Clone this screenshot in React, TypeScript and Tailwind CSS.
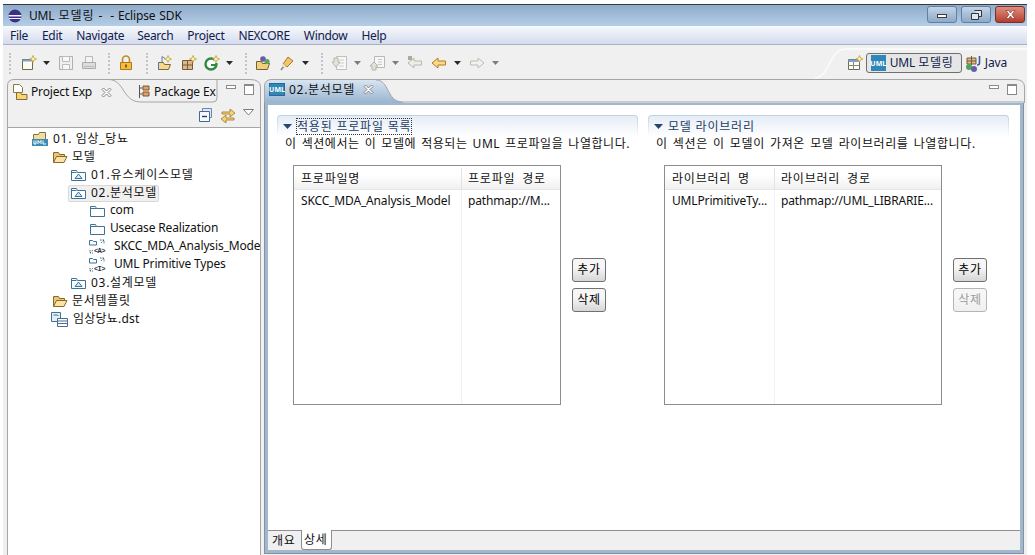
import type { ReactNode } from 'react'

function Svg({ w = 16, h = 16, children, className }: { w?: number; h?: number; children: ReactNode; className?: string }) {
  return (
    <svg width={w} height={h} viewBox={`0 0 ${w} ${h}`} className={`shrink-0 block ${className ?? ''}`}>
      {children}
    </svg>
  )
}

function Grip({ className }: { className: string }) {
  return <span className={`block h-[21px] w-[2px] border-l-2 border-dotted border-[#c4c4c4] ${className}`} />
}

function Drop({ className, off }: { className: string; off?: boolean }) {
  return (
    <Svg w={7} h={4} className={className}>
      <path d="M0 0h7L3.5 4z" fill={off ? '#7d7d7d' : '#2b2b2b'} />
    </Svg>
  )
}

const Spark = ({ x, y }: { x: number; y: number }) => (
  <path d={`M${x} ${y - 3.5}l1 2.5 2.5 1-2.5 1-1 2.5-1-2.5-2.5-1 2.5-1z`} fill="#fff3b0" stroke="#b99a2c" strokeWidth=".7" />
)

function NewIcon() {
  return (
    <Svg>
      <path d="M1.5 4.5h10v10h-10z" fill="#fbfbf4" stroke="#6f6a4a" />
      <path d="M1.5 4.5h10v2h-10z" fill="#7fa3cc" />
      <Spark x={12} y={4} />
    </Svg>
  )
}

function SaveIcon() {
  return (
    <Svg>
      <path d="M1.5 1.5h13v13h-13z" fill="#efefef" stroke="#b0b0b0" />
      <path d="M4.5 1.5h7v5h-7zM4.5 9.5h7v5h-7z" fill="#f8f8f8" stroke="#bcbcbc" />
    </Svg>
  )
}

function PrintIcon() {
  return (
    <Svg>
      <path d="M4.5 1.5h7v6h-7z" fill="#f4f4f4" stroke="#b8b8b8" />
      <path d="M1.5 7.5h13v6h-13z" fill="#dcdcdc" stroke="#aaa" />
      <path d="M3 11.5h10" stroke="#bbb" />
    </Svg>
  )
}

function LockIcon() {
  return (
    <Svg>
      <path d="M4.5 7V4.5a3.5 3.5 0 017 0V7" fill="none" stroke="#c08a1e" strokeWidth="1.6" />
      <path d="M2.5 7.5h11v7h-11z" fill="#f5bd3f" stroke="#b0761a" />
      <path d="M7 9.5h2v3H7z" fill="#8a5a10" />
    </Svg>
  )
}

function OpenProjIcon() {
  return (
    <Svg>
      <path d="M5 1.5v6M5 1.5l3 2" stroke="#5a7fb0" fill="none" />
      <path d="M1.5 7.5h5l1 2h6l-2 5h-10z" fill="#f5d98a" stroke="#7a6c3c" />
      <path d="M1.5 14.5v-7" stroke="#4d79b3" />
      <Spark x={11} y={4} />
    </Svg>
  )
}

function GridIcon() {
  return (
    <Svg>
      <path d="M1.5 5.5h10v9h-10z" fill="#d9b98a" stroke="#7b5a38" />
      <path d="M6.5 5.5v9M1.5 10h10" stroke="#7b5a38" />
      <Spark x={12} y={4} />
    </Svg>
  )
}

function GIcon() {
  return (
    <Svg>
      <circle cx="7" cy="9" r="5.5" fill="#fff" stroke="#2f8a3e" strokeWidth="2.4" />
      <path d="M7 9h5v2H7z" fill="#2f8a3e" />
      <path d="M10 4h4v4h-4z" fill="#f0f0f0" />
      <Spark x={12} y={4} />
    </Svg>
  )
}

function FolderBalls() {
  return (
    <Svg>
      <path d="M1.5 6.5h5l1 2h7l-2 6h-11z" fill="#f2cf7c" stroke="#75622f" />
      <circle cx="8" cy="4" r="2.8" fill="#6a5ba8" />
      <circle cx="12" cy="6.5" r="2.6" fill="#5aa55a" />
    </Svg>
  )
}

function PinIcon() {
  return (
    <Svg>
      <path d="M9 2l5 4-6 6-4-3z" fill="#f3c46a" stroke="#a8782a" />
      <path d="M5 11l-3 4" stroke="#8a8a8a" strokeWidth="1.6" />
      <path d="M3 9l4 4" stroke="#e8e8d0" strokeWidth="2" />
    </Svg>
  )
}

function DocDownIcon() {
  return (
    <Svg>
      <path d="M4.5 1.5h10v13h-10z" fill="#f7f7f7" stroke="#c0c0c0" />
      <path d="M7 5h5M7 8h5M7 11h5" stroke="#d0d0d0" />
      <path d="M2 3h4v4h2l-4 5-4-5h2z" fill="#e4e4da" stroke="#b4b4a8" />
    </Svg>
  )
}

function DocUpIcon() {
  return (
    <Svg>
      <path d="M4.5 1.5h10v11h-10z" fill="#f7f7f7" stroke="#b8b8b8" />
      <path d="M8 4.5h4M8 7h4M8 9.5h4" stroke="#c8c8c8" />
      <path d="M4 7l4 4H6v4H2v-4H0z" fill="#e2e2d8" stroke="#b4b4a8" />
    </Svg>
  )
}

function ArrowLeft({ fill, stroke, dot }: { fill: string; stroke: string; dot?: boolean }) {
  return (
    <Svg>
      <path d="M1 8l6-5v3h7.5v4H7v3z" fill={fill} stroke={stroke} strokeLinejoin="round" />
      {dot && <path d="M1 1h4v4H1z" fill="#a9a9a9" />}
    </Svg>
  )
}

function ArrowRight() {
  return (
    <Svg>
      <path d="M15 8L9 3v3H1.5v4H9v3z" fill="#f2f2ee" stroke="#bdbdb4" strokeLinejoin="round" />
    </Svg>
  )
}

function UmlBadge({ className }: { className?: string }) {
  return (
    <span className={`flex items-center justify-center bg-[#2f86b8] text-[7px] font-bold leading-none tracking-normal text-white ${className ?? ''}`}>
      UML
    </span>
  )
}

function PerspectiveIcon() {
  return (
    <Svg>
      <path d="M1.5 4.5h11v10h-11z" fill="#fff" stroke="#6b6b4f" />
      <path d="M1.5 4.5h11v2.5h-11z" fill="#7fa3cc" />
      <path d="M6.5 7v7.5M1.5 10.5h11" stroke="#8c8c6c" />
      <Spark x={12.5} y={4} />
    </Svg>
  )
}

function JavaIcon() {
  return (
    <Svg w={17} h={17}>
      <path d="M2 3h9v6H2z" fill="#d9b98a" stroke="#7b5a38" />
      <path d="M6.5 1v9M2 6h9" stroke="#7b5a38" />
      <circle cx="4" cy="12" r="3" fill="#4fa35a" />
      <circle cx="9" cy="14" r="3" fill="#6a5ba8" />
      <path d="M14.5 1v7q0 2-2.5 2" fill="none" stroke="#2e5f9e" strokeWidth="1.6" />
    </Svg>
  )
}

function MinMax({ className }: { className: string }) {
  return (
    <div className={`absolute flex items-start ${className}`}>
      <span className="mt-[1px] block h-[4px] w-[10px] border border-[#8a8a8a] bg-white" />
      <span className="ml-[8px] block h-[11px] w-[10px] border border-[#8a8a8a] border-t-2 bg-white" />
    </div>
  )
}

function CloseX({ className }: { className?: string }) {
  return (
    <Svg w={11} h={11} className={className}>
      <path d="M1 2.5L2.5 1 5.5 4 8.5 1 10 2.5 7 5.5 10 8.5 8.5 10 5.5 7 2.5 10 1 8.5 4 5.5z" fill="#fff" stroke="#777" strokeWidth=".9" />
    </Svg>
  )
}

function ProjectFolder() {
  return (
    <Svg>
      <path d="M1.5 3.5h5l1-2h6v8h-12z" fill="#f2dca0" stroke="#85743f" />
      <path d="M0 8h16v7H0z" fill="#3c8cb4" />
      <path d="M2 9.5v3.500h2v-3.500M6 13V9.500l1.500 2 1.500-2V13M11 9.500V13h3" fill="none" stroke="#fff" />
    </Svg>
  )
}

function OpenFolder() {
  return (
    <Svg>
      <path d="M1.500 13.500v-10h5l1 2h5v2" fill="#f0c36e" stroke="#8a6a2c" />
      <path d="M1.500 13.500l3-6h10.500l-3 6z" fill="#fbe3a6" stroke="#8a6a2c" />
    </Svg>
  )
}

function PackageFolder() {
  return (
    <Svg w={15} h={16}>
      <path d="M.5 3.500h5l1 2h8v8H.5z" fill="#fff" stroke="#3d7396" />
      <path d="M.5 5.500h5" stroke="#3d7396" />
      <path d="M7.500 7l3.500 4.500H4z" fill="#d6e6f2" stroke="#3d7396" />
    </Svg>
  )
}

function PlainFolder() {
  return (
    <Svg w={15} h={16}>
      <path d="M.5 3.500h5l1 2h8v8H.5z" fill="#fff" stroke="#3d7396" />
      <path d="M.5 5.500h6" stroke="#3d7396" />
    </Svg>
  )
}

function ProfileIcon({ letter }: { letter: string }) {
  return (
    <span className="relative block h-[16px] w-[16px] shrink-0">
      <Svg>
        <path d="M.5 1.500h3l1 1h3v3.500h-7z" fill="#fff" stroke="#3d7396" />
        <path d="M11 1h4v4M15 1l-3 3M1 14l3-3M1 11v3h3" fill="none" stroke="#44687f" strokeDasharray="1.500 1" />
      </Svg>
      <span className="absolute left-[5px] top-[8px] font-['Liberation_Mono',monospace] text-[7px] font-bold leading-[8px] tracking-[-0.6px] text-[#1f2f40]">{`<${letter}>`}</span>
    </span>
  )
}

function DstIcon() {
  return (
    <Svg w={17} h={16}>
      <path d="M.5 1.500h9v9h-9z" fill="#e3eefa" stroke="#3d7396" />
      <path d="M2.500 4h4l1 1" fill="none" stroke="#3d7396" />
      <path d="M6.500 7.500h10v8h-10z" fill="#fff" stroke="#4b6d91" />
      <path d="M6.500 10h10M6.500 12.500h10" stroke="#4b6d91" />
    </Svg>
  )
}

function TreeRow({ pad, icon, text, gap }: { pad: string; icon: ReactNode; text: string; gap: string }) {
  return (
    <div className={`flex h-[18px] items-center whitespace-nowrap ${pad}`}>
      {icon}
      <span className={gap}>{text}</span>
    </div>
  )
}

function ProfileTable({
  width,
  col1,
  head1,
  head2,
  cell1,
  cell2,
}: {
  width: string
  col1: string
  head1: string
  head2: string
  cell1: string
  cell2: string
}) {
  return (
    <div className={`flex h-[240px] flex-col border border-[#8c8c8c] bg-white ${width}`}>
      <div className="flex h-[24px] border-b border-[#e6e6e6] bg-gradient-to-b from-white from-40% to-[#f0f0f0] pt-[2px] tracking-[0.8px] [word-spacing:3px]">
        <div className={`flex items-center border-r border-[#e3e3e3] pl-[7px] ${col1}`}>{head1}</div>
        <div className="flex flex-1 items-center pl-[6px]">{head2}</div>
      </div>
      <div className="flex flex-1">
        <div className={`border-r border-[#edf2fb] pl-[7px] pt-[5px] ${col1}`}>
          <div className="whitespace-nowrap">{cell1}</div>
        </div>
        <div className="flex-1 pl-[6px] pt-[5px]">
          <div className="whitespace-nowrap">{cell2}</div>
        </div>
      </div>
    </div>
  )
}

function SmallButton({ label, off }: { label: string; off?: boolean }) {
  return (
    <button
      className={`h-[24px] w-[34px] rounded-[3px] border bg-gradient-to-b from-[#f6f6f6] from-40% to-[#d6d6d6] text-[12px] tracking-[0.6px] ${
        off ? 'border-[#b5b5b5] from-[#f4f4f4] to-[#efefef] text-[#9a9a9a]' : 'border-[#707070] text-black'
      }`}
    >
      {label}
    </button>
  )
}

function Section({
  title,
  focused,
  desc,
  descClass,
  table,
  deleteOff,
}: {
  title: string
  focused?: boolean
  desc: string
  descClass: string
  table: ReactNode
  deleteOff?: boolean
}) {
  return (
    <section className="w-[361px]">
      <div className="rounded-t-[4px] bg-gradient-to-b from-[#bcd0e6] to-white px-[1px] pt-[1px]">
        <div className="flex h-[21px] items-center rounded-t-[3px] bg-gradient-to-b from-[#e6edf6] to-white pl-[5px]">
          <Svg w={9} h={5}>
            <path d="M0 0h9L4.500 5z" fill="#24466f" />
          </Svg>
          <span
            className={`ml-[5px] flex h-[15px] items-center text-[#1c3d66] tracking-[0.8px] ${focused ? 'outline-1 outline-dotted outline-[#333]' : ''}`}
          >
            {title}
          </span>
        </div>
      </div>
      <p className={`-mt-[2px] ml-[8px] h-[18px] whitespace-nowrap leading-[18px] ${descClass}`}>{desc}</p>
      <div className="ml-[16px] mt-[12px] flex items-start">
        {table}
        <div className="ml-[11px] mt-[93px] flex flex-col gap-[6px]">
          <SmallButton label="추가" />
          <SmallButton label="삭제" off={deleteOff} />
        </div>
      </div>
    </section>
  )
}

const KO = 'tracking-[0.7px]'

export default function App() {
  return (
    <div className="h-[555px] w-[1035px] overflow-hidden bg-white pl-[3px] pt-[4px] font-['Noto_Sans','Noto_Sans_CJK_KR',sans-serif] text-[12px] leading-none tracking-[-0.15px] text-[#111]">
      <div className="flex h-[551px] w-[1024px] flex-col bg-[#f0f0f0]">
        {/* title bar */}
        <header className="flex h-[22px] shrink-0 items-center border-t border-[#3a3a3a] bg-gradient-to-b from-[#8facca] to-[#b5cde6] pl-[4px]">
          <Svg>
            <circle cx="8" cy="8" r="6.500" fill="#3b2f87" />
            <path d="M1.500 7h13v1.500h-13zM2 10h12v1H2z" fill="#f2f2f8" />
          </Svg>
          <span className="ml-[6px] whitespace-pre text-[#101010] [word-spacing:1px]">
            UML <span className="tracking-[1px]">모델링</span> -  - Eclipse SDK
          </span>
          <div className="ml-auto mr-[2px] flex gap-[4px] self-start pt-[1px]">
            <span className="flex h-[17px] w-[30px] items-center justify-center rounded-[3px] border border-[#5f7fa3] bg-gradient-to-b from-[#c3d5e8] to-[#8ea9c7]">
              <span className="mt-[2px] block h-[4px] w-[10px] border border-[#3c3c3c] bg-white" />
            </span>
            <span className="flex h-[17px] w-[30px] items-center justify-center rounded-[3px] border border-[#5f7fa3] bg-gradient-to-b from-[#c3d5e8] to-[#8ea9c7]">
              <Svg w={11} h={10}>
                <path d="M3.500.5h7v6h-3M.5 3.500h7v6h-7z" fill="#dfe8f2" stroke="#333" />
              </Svg>
            </span>
            <span className="flex h-[17px] w-[30px] items-center justify-center rounded-[3px] border border-[#7a3030] bg-gradient-to-b from-[#dc8f7d] to-[#b63c2c]">
              <Svg w={13} h={9}>
                <path d="M2 .5h2.500L6.500 3l2-2.500H11L8 4.500l3 4H8.500l-2-2.500-2 2.500H2l3-4z" fill="#fff" stroke="#6b2a22" strokeWidth=".6" />
              </Svg>
            </span>
          </div>
        </header>

        {/* menu */}
        <nav className="flex h-[19px] shrink-0 items-center border-b border-[#a9b1c6] bg-gradient-to-b from-[#f7f9fc] to-[#d4dbee] pt-[1px] tracking-[-0.3px] text-[#10204a]">
          <span className="ml-[7px]">File</span>
          <span className="ml-[14px]">Edit</span>
          <span className="ml-[14px]">Navigate</span>
          <span className="ml-[13px]">Search</span>
          <span className="ml-[14px]">Project</span>
          <span className="ml-[14px]">NEXCORE</span>
          <span className="ml-[14px]">Window</span>
          <span className="ml-[14px]">Help</span>
        </nav>

        {/* toolbar */}
        <div className="relative flex h-[34px] shrink-0 items-center pt-[2px]">
          <svg width="212" height="34" className="absolute right-0 top-0">
            <path d="M0 33c14 0 14-28 30-29h182" fill="none" stroke="#fbfbfb" strokeWidth="1.500" />
          </svg>
          <Grip className="ml-[6px]" />
          <span className="ml-[10px]"><NewIcon /></span>
          <Drop className="ml-[6px]" />
          <span className="ml-[8px]"><SaveIcon /></span>
          <span className="ml-[7px]"><PrintIcon /></span>
          <Grip className="ml-[11px]" />
          <span className="ml-[8px]"><LockIcon /></span>
          <Grip className="ml-[12px]" />
          <span className="ml-[9px]"><OpenProjIcon /></span>
          <span className="ml-[8px]"><GridIcon /></span>
          <span className="ml-[7px]"><GIcon /></span>
          <Drop className="ml-[6px]" />
          <Grip className="ml-[12px]" />
          <span className="ml-[8px]"><FolderBalls /></span>
          <span className="ml-[8px]"><PinIcon /></span>
          <Drop className="ml-[7px]" />
          <Grip className="ml-[12px]" />
          <span className="ml-[9px]"><DocDownIcon /></span>
          <Drop off className="ml-[6px]" />
          <span className="ml-[9px]"><DocUpIcon /></span>
          <Drop off className="ml-[6px]" />
          <span className="ml-[8px]"><ArrowLeft fill="#eeeee6" stroke="#b8b8ac" dot /></span>
          <span className="ml-[8px]"><ArrowLeft fill="#fbd98a" stroke="#b8781c" /></span>
          <Drop className="ml-[7px]" />
          <span className="ml-[8px]"><ArrowRight /></span>
          <Drop off className="ml-[7px]" />
          <div className="relative ml-auto mr-[20px] flex items-center">
            <PerspectiveIcon />
            <div className="ml-[3px] flex h-[20px] w-[96px] items-center rounded-[3px] border border-[#6f6f6f] bg-[#e6e6e6] pl-[4px] text-[#10204a]">
              <UmlBadge className="h-[16px] w-[15px]" />
              <span className="ml-[4px] whitespace-nowrap">
                UML <span className={KO}>모델링</span>
              </span>
            </div>
            <span className="ml-[3px]"><JavaIcon /></span>
            <span className="ml-[3px] text-[#10204a]">Java</span>
          </div>
        </div>

        {/* main area */}
        <main className="flex min-h-0 flex-1 gap-[3px] pl-[4px] pr-[3px]">
          {/* project explorer */}
          <div className="flex w-[254px] flex-col">
            <div className="relative h-[24px] shrink-0">
              <svg width="254" height="24" className="absolute left-0 top-0">
                <path
                  d="M.5 24V7Q.5.5 7 .5H243Q253.500.5 253.500 8V24M102 .5C118 1 115 23 134 23H206Q210 23 210 19V1"
                  fill="none"
                  stroke="#a6a6a6"
                />
              </svg>
              <div className="absolute left-[5px] top-[5px] flex items-center">
                <Svg>
                  <path d="M1.500.5h6l3 3v5h-9z" fill="#fff" stroke="#8a7a4a" />
                  <path d="M4.500 8.500h4l1 2h5.500v5h-10.500z" fill="#f6d27a" stroke="#8a6a2c" />
                </Svg>
                <span className="ml-[3px] whitespace-nowrap">Project Exp</span>
                <CloseX className="ml-[9px]" />
              </div>
              <div className="absolute left-[131px] top-[5px] flex items-center">
                <Svg w={12} h={16}>
                  <path d="M1.500 1v13M1.500 4h3M1.500 10h3" stroke="#555" fill="none" />
                  <path d="M5 2h6v4H5zM5 8h6v4H5z" fill="#d9a466" stroke="#80552c" />
                </Svg>
                <span className="ml-[4px] whitespace-nowrap">Package Ex</span>
              </div>
              <MinMax className="left-[219px] top-[5px]" />
            </div>
            <div className="flex h-[25px] shrink-0 items-center justify-end border-x border-b border-[#a6a6a6] pr-[6px]">
              <Svg>
                <path d="M4.500 1.500h9v9h-9z" fill="#dfe8f4" stroke="#6a87ad" />
                <path d="M1.500 4.500h10v10h-10z" fill="#f6f9fd" stroke="#48678e" />
                <path d="M4 9.500h5" stroke="#1f3f6b" strokeWidth="1.400" />
              </Svg>
              <Svg className="ml-[6px]">
                <path d="M2 5h8V2l5 4-5 4V7H2zM14 11H6V8l-5 4 5 4v-3h8z" fill="#f6d27a" stroke="#a0761f" strokeWidth=".8" />
              </Svg>
              <Svg w={11} h={7} className="mb-[6px] ml-[7px]">
                <path d="M.5.5h10L5.500 6z" fill="#fff" stroke="#7c7c7c" />
              </Svg>
            </div>
            <div className="flex-1 overflow-hidden border-x border-[#a6a6a6] bg-white pt-[2px]">
              <TreeRow pad="pl-[24px]" gap={`ml-[5px] ${KO}`} icon={<ProjectFolder />} text="01. 임상_당뇨" />
              <TreeRow pad="pl-[44px]" gap={`ml-[4px] ${KO}`} icon={<OpenFolder />} text="모델" />
              <TreeRow pad="pl-[63px]" gap={`ml-[5px] tracking-[0.85px]`} icon={<PackageFolder />} text="01.유스케이스모델" />
              <div className="flex h-[18px] items-center pl-[60px]">
                <div className="flex h-[17px] items-center rounded-[2px] border border-[#d8d8d8] bg-[#f0f0f0] pl-[2px] pr-[1px]">
                  <PackageFolder />
                  <span className={`ml-[5px] whitespace-nowrap ${KO}`}>02.분석모델</span>
                </div>
              </div>
              <TreeRow pad="pl-[82px]" gap="-mt-[2px] ml-[5px]" icon={<PlainFolder />} text="com" />
              <TreeRow pad="pl-[82px]" gap="-mt-[2px] ml-[5px]" icon={<PlainFolder />} text="Usecase Realization" />
              <TreeRow pad="pl-[81px]" gap="-mt-[2px] ml-[9px]" icon={<ProfileIcon letter="A" />} text="SKCC_MDA_Analysis_Model" />
              <TreeRow pad="pl-[81px]" gap="-mt-[2px] ml-[9px]" icon={<ProfileIcon letter="I" />} text="UML Primitive Types" />
              <TreeRow pad="pl-[63px]" gap={`ml-[5px] ${KO}`} icon={<PackageFolder />} text="03.설계모델" />
              <TreeRow pad="pl-[44px]" gap={`ml-[4px] ${KO}`} icon={<OpenFolder />} text="문서템플릿" />
              <TreeRow pad="pl-[43px]" gap="ml-[5px] tracking-[0.2px]" icon={<DstIcon />} text="임상당뇨.dst" />
            </div>
          </div>

          {/* editor */}
          <div className="flex min-w-0 flex-1 flex-col">
            <div className="relative h-[24px] shrink-0">
              <svg width="761" height="24" className="absolute left-0 top-0">
                <defs>
                  <linearGradient id="tabBlue" x1="0" y1="0" x2="0" y2="1">
                    <stop offset="0" stopColor="#d8e4f1" />
                    <stop offset="1" stopColor="#98b4d0" />
                  </linearGradient>
                </defs>
                <path d="M.5 24V7Q.5 1 7 1H112C126 1 122 23 139 23V24H.5z" fill="url(#tabBlue)" />
                <path d="M.5 24V7Q.5 1 7 .5H752Q760.500 1 760.500 8V24M112 1C126 1 122 23 139 23H760" fill="none" stroke="#a6a6a6" />
              </svg>
              <div className="absolute left-[5px] top-[4px] flex items-center">
                <UmlBadge className="h-[13px] w-[16px] border border-[#2a6a90]" />
                <span className={`ml-[4px] whitespace-nowrap ${KO}`}>02.분석모델</span>
                <CloseX className="ml-[8px]" />
              </div>
              <MinMax className="left-[725px] top-[5px]" />
            </div>
            <div className="flex min-h-0 flex-1 flex-col border-x border-b border-[#8f8f8f] bg-[#9db8d3] p-[3px] pt-[2px]">
              <div className="flex min-h-0 flex-1 gap-[10px] bg-white pl-[9px] pt-[10px]">
                <Section
                  title="적용된 프로파일 목록"
                  focused
                  desc="이 섹션에서는 이 모델에 적용되는 UML 프로파일을 나열합니다."
                  descClass="tracking-[0.55px] [word-spacing:1.4px]"
                  table={
                    <ProfileTable
                      width="w-[268px]"
                      col1="w-[168px]"
                      head1="프로파일명"
                      head2="프로파일 경로"
                      cell1="SKCC_MDA_Analysis_Model"
                      cell2="pathmap://M..."
                    />
                  }
                />
                <Section
                  title="모델 라이브러리"
                  desc="이 섹션은 이 모델이 가져온 모델 라이브러리를 나열합니다."
                  descClass="tracking-[0.6px] [word-spacing:1.5px]"
                  deleteOff
                  table={
                    <ProfileTable
                      width="w-[278px]"
                      col1="w-[110px]"
                      head1="라이브러리 명"
                      head2="라이브러리 경로"
                      cell1="UMLPrimitiveTy..."
                      cell2="pathmap://UML_LIBRARIE..."
                    />
                  }
                />
              </div>
              <div className="flex h-[20px] shrink-0 border-t border-[#8f8f8f] bg-[#f0f0f0] pl-[2px] tracking-[0.6px]">
                <span className="flex w-[31px] items-center pl-[2px]">개요</span>
                <span className="-mt-[1px] flex w-[31px] items-center rounded-b-[3px] border-x border-b border-[#8f8f8f] bg-white pl-[2px]">상세</span>
              </div>
            </div>
            <div className="h-[1px] shrink-0" />
          </div>
        </main>
      </div>
    </div>
  )
}
